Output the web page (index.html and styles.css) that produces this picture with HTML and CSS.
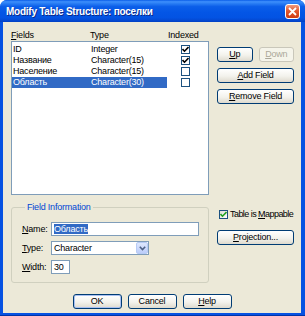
FILE: index.html
```html
<!DOCTYPE html>
<html lang="ru">
<head>
    <meta charset="UTF-8">
    <title>Modify Table Structure</title>
    <link rel="stylesheet" href="styles.css">
</head>
<body>
    <div class="window">
        <div class="titlebar">
            <span class="title">Modify Table Structure: поселки</span>
            <span class="close">
                <svg width="9" height="9" viewBox="0 0 9 9"><path d="M1 1 L8 8 M8 1 L1 8" stroke="#fff" stroke-width="1.8"/></svg>
            </span>
        </div>
        <div class="client">
            <div class="main">
                <div class="left">
                    <div class="head">
                        <span><u>F</u>ields</span>
                        <span>Type</span>
                        <span>Indexed</span>
                    </div>
                    <div class="list">
                        <div class="row">
                            <span class="cell">ID</span>
                            <span class="cell">Integer</span>
                            <span class="box"><svg width="7" height="7" viewBox="0 0 7 7"><path d="M0.5 3 L2.5 5.2 L6.5 1" fill="none" stroke="#000" stroke-width="1.6"/></svg></span>
                        </div>
                        <div class="row">
                            <span class="cell">Название</span>
                            <span class="cell">Character(15)</span>
                            <span class="box"><svg width="7" height="7" viewBox="0 0 7 7"><path d="M0.5 3 L2.5 5.2 L6.5 1" fill="none" stroke="#000" stroke-width="1.6"/></svg></span>
                        </div>
                        <div class="row">
                            <span class="cell">Население</span>
                            <span class="cell">Character(15)</span>
                            <span class="box"></span>
                        </div>
                        <div class="row sel">
                            <span class="cell">Область</span>
                            <span class="cell">Character(30)</span>
                            <span class="box"></span>
                        </div>
                    </div>
                    <fieldset class="group">
                        <legend>Field Information</legend>
                        <div class="form">
                            <label><u>N</u>ame:</label>
                            <div class="edit"><span class="hl">Область</span></div>
                            <label><u>T</u>ype:</label>
                            <div class="combo">
                                <span>Character</span>
                                <span class="drop"><svg width="7" height="5" viewBox="0 0 7 5"><path d="M0.8 0.8 L3.5 3.5 L6.2 0.8" fill="none" stroke="#4d6185" stroke-width="1.6"/></svg></span>
                            </div>
                            <label><u>W</u>idth:</label>
                            <div class="edit short">30</div>
                        </div>
                    </fieldset>
                </div>
                <div class="right">
                    <div class="pair">
                        <button class="btn"><u>U</u>p</button>
                        <button class="btn" disabled><u>D</u>own</button>
                    </div>
                    <button class="btn"><u>A</u>dd Field</button>
                    <button class="btn"><u>R</u>emove Field</button>
                    <div class="mappable">
                        <span class="check"><svg width="7" height="7" viewBox="0 0 7 7"><path d="M0.5 3 L2.5 5.2 L6.5 1" fill="none" stroke="#21a121" stroke-width="1.6"/></svg></span>
                        <span>Table is <u>M</u>appable</span>
                    </div>
                    <button class="btn proj"><u>P</u>rojection...</button>
                </div>
            </div>
            <div class="footer">
                <button class="btn default">OK</button>
                <button class="btn">Cancel</button>
                <button class="btn"><u>H</u>elp</button>
            </div>
        </div>
    </div>
</body>
</html>
```

FILE: styles.css
```css
* {
    margin: 0;
    padding: 0;
    box-sizing: border-box;
}
body {
    background: #fff;
    font-family: "Liberation Sans", Arial, sans-serif;
    font-size: 9px;
    letter-spacing: -0.2px;
    line-height: 11px;
    color: #000;
}
u {
    text-decoration: underline;
    text-underline-offset: 1px;
}
.window {
    width: 305px;
    height: 316px;
    display: flex;
    flex-direction: column;
    background: #0652e2;
    border-radius: 7px 7px 0 0;
    border-bottom: 1px solid #0033a8;
}
.titlebar {
    height: 22px;
    flex: none;
    display: flex;
    align-items: center;
    justify-content: space-between;
    padding: 0 5px 0 6px;
    border-radius: 7px 7px 0 0;
    background: linear-gradient(to bottom, #0a5de8 0%, #3e8ffc 8%, #2b7ff5 15%, #0b5ee9 30%, #0456e6 55%, #0353e3 80%, #0448d1 93%, #0141c4 100%);
}
.title {
    color: #fff;
    font-weight: bold;
    font-size: 10px;
    letter-spacing: -0.25px;
    text-shadow: 1px 1px #0a2a8a;
}
.close {
    width: 15px;
    height: 15px;
    display: flex;
    align-items: center;
    justify-content: center;
    border: 1px solid #fff;
    border-radius: 3px;
    background: linear-gradient(to bottom, #f09a7e, #e2582f 45%, #cf3c12);
}
.client {
    flex: 1;
    margin: 0 4px 2px 3px;
    background: #ece9d8;
    padding: 8px 0 0 8px;
}
.main {
    display: flex;
    gap: 8px;
}
.left {
    width: 198px;
}
.head {
    display: grid;
    grid-template-columns: 79px 78px 1fr;
    height: 11px;
}
.list {
    height: 154px;
    border: 1px solid #7f9db9;
    background: #fff;
    padding-top: 2px;
}
.row {
    display: grid;
    grid-template-columns: 78px 77px 1fr;
    height: 11px;
}
.cell {
    padding-left: 1px;
    white-space: nowrap;
}
.sel .cell {
    background: #316ac5;
    color: #fff;
}
.box {
    width: 9px;
    height: 9px;
    margin: 1px 0 0 14px;
    border: 1px solid #1c5180;
    background: #fff;
    display: flex;
    align-items: center;
    justify-content: center;
}
.group {
    margin-top: 7px;
    border: 1px solid #d0d0bf;
    border-radius: 3px;
    padding: 9px 9px 8px 10px;
}
.group legend {
    margin-left: 3px;
    padding: 0 2px;
    color: #0046d5;
    line-height: 11px;
}
.form {
    display: grid;
    grid-template-columns: 29px 1fr;
    grid-auto-rows: 14px;
    row-gap: 5px;
    align-items: center;
}
.edit {
    height: 14px;
    border: 1px solid #7f9db9;
    background: #fff;
    padding: 1px 2px;
    line-height: 10px;
}
.edit.short {
    width: 19px;
}
.hl {
    background: #316ac5;
    color: #fff;
}
.combo {
    width: 98px;
    height: 14px;
    border: 1px solid #7f9db9;
    background: #fff;
    display: flex;
    align-items: center;
    justify-content: space-between;
    padding-left: 2px;
}
.drop {
    width: 12px;
    height: 12px;
    border-radius: 2px;
    border: 1px solid #b7cbf5;
    background: linear-gradient(to bottom, #dde7fd, #bccdfa);
    display: flex;
    align-items: center;
    justify-content: center;
}
.right {
    width: 77px;
    display: flex;
    flex-direction: column;
    gap: 6px;
    padding-top: 17px;
}
.pair {
    display: grid;
    grid-template-columns: 1fr 1fr;
    gap: 6px;
}
.btn {
    height: 15px;
    border: 1px solid #003c74;
    border-radius: 3px;
    background: linear-gradient(to bottom, #ffffff, #f3f2ec 55%, #dedace);
    font: inherit;
    letter-spacing: inherit;
    color: #000;
    display: flex;
    align-items: center;
    justify-content: center;
}
.btn:disabled {
    border-color: #c9c7ba;
    background: #f5f4ea;
    color: #aca899;
}
.mappable {
    margin-top: 99px;
    display: flex;
    align-items: center;
    gap: 2px;
    padding-left: 2px;
    white-space: nowrap;
    letter-spacing: -0.55px;
}
.check {
    width: 9px;
    height: 9px;
    border: 1px solid #1c5180;
    background: linear-gradient(135deg, #dcdcd6, #fff);
    display: flex;
    align-items: center;
    justify-content: center;
}
.proj {
    margin-top: 4px;
}
.footer {
    display: flex;
    justify-content: center;
    gap: 6px;
    margin-top: 11px;
    padding-right: 8px;
}
.footer .btn {
    width: 49px;
}
.btn.default {
    box-shadow: inset 0 0 0 1px #a9c0f1;
}
```
